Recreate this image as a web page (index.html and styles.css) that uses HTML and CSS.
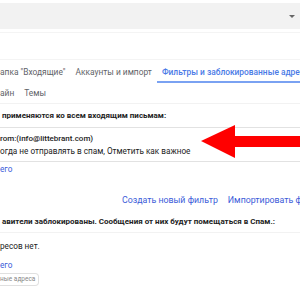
FILE: index.html
```html
<!DOCTYPE html>
<html lang="ru">
<head>
    <meta charset="UTF-8">
    <title>Настройки</title>
    <link rel="stylesheet" href="styles.css">
</head>
<body>
    <div class="search-bar">
        <span class="caret"></span>
    </div>
    <div class="header-space"></div>

    <!-- Settings tabs -->
    <div class="tabs">
        <div class="tab-row">
            <span class="tab tab-first">апка "Входящие"</span>
            <span class="tab">Аккаунты и импорт</span>
            <span class="tab active">Фильтры и заблокированные адреса</span>
        </div>
        <div class="tab-row tab-row-second">
            <span class="tab tab-first">айн</span>
            <span class="tab">Темы</span>
        </div>
    </div>

    <div class="content">
        <div class="section-title">применяются ко всем входящим письмам:</div>

        <div class="filter-row">
            <div class="filter-rule">rom:(info@littebrant.com)</div>
            <div class="filter-action">огда не отправлять в спам, Отметить как важное</div>
            <!-- Red pointer arrow over the row -->
            <svg class="pointer" width="100" height="34" viewBox="0 0 100 34">
                <polygon points="0,16 34,0 34,11 100,11 100,22 34,22 34,33" fill="#ff0000"/>
            </svg>
        </div>

        <a class="link select-link">его</a>

        <div class="filter-actions">
            <a class="link">Создать новый фильтр</a>
            <a class="link">Импортировать фильтры</a>
        </div>

        <div class="section-title blocked-title">авители заблокированы. Сообщения от них будут помещаться в Спам.:</div>

        <div class="blocked-list">
            <div class="empty-text">ресов нет.</div>
            <a class="link select-link">его</a>
            <span class="small-button">ные адреса</span>
        </div>
    </div>
</body>
</html>
```

FILE: styles.css
```css
body {
    margin: 0;
    padding: 0;
    font-family: Roboto, "Liberation Sans", Arial, sans-serif;
    font-size: 8.2px;
    color: #222222;
    background-color: #ffffff;
    overflow: hidden;
}

.search-bar {
    height: 26px;
    margin-top: 3px;
    background-color: #f2f2f2;
    display: flex;
    align-items: center;
    justify-content: flex-end;
    padding-right: 5px;
}

.caret {
    width: 0;
    height: 0;
    border-left: 3px solid transparent;
    border-right: 3px solid transparent;
    border-top: 3px solid #666666;
}

.header-space {
    height: 26px;
    border-top: 1px solid #f4f4f4;
    margin-top: 3px;
}

.tabs {
    border-top: 1px solid #f4f4f4;
    border-bottom: 1px solid #f2f2f2;
}

.tab-row {
    display: flex;
    height: 23px;
    align-items: stretch;
}

.tab-row-second {
    height: 20px;
}

.tab {
    font-size: 8.4px;
    color: #5f6368;
    padding: 0 5px;
    display: flex;
    align-items: center;
    white-space: nowrap;
}

.tab-first {
    padding-left: 0;
}

.active {
    color: #4a7ae6;
    font-weight: 500;
    border-bottom: 2px solid #7aa2f2;
    padding-top: 2px;
}

.content {
    display: flex;
    flex-direction: column;
}

.section-title {
    font-size: 8px;
    font-weight: bold;
    line-height: 11px;
    padding: 6px 2px;
    white-space: nowrap;
}

.filter-row {
    position: relative;
    border-top: 1px solid #e2e2e2;
    border-bottom: 1px solid #e2e2e2;
    padding: 5px 0 4px;
    line-height: 12px;
}

.filter-rule {
    font-size: 8px;
    font-weight: 500;
}

.pointer {
    position: absolute;
    left: 201px;
    top: -3px;
}

.link {
    color: #3b5bd9;
    text-decoration: none;
}

.select-link {
    padding-top: 1px;
    line-height: 12px;
}

.filter-actions {
    display: flex;
    gap: 10px;
    padding-left: 122px;
    margin-top: 19px;
    font-size: 8.8px;
    line-height: 12px;
    white-space: nowrap;
}

.blocked-title {
    margin-top: 4px;
    padding-bottom: 5px;
    border-bottom: 1px solid #f2f2f2;
}

.blocked-list {
    display: flex;
    flex-direction: column;
    align-items: flex-start;
    padding-top: 7px;
    line-height: 12px;
}

.blocked-list .select-link {
    margin-top: 7px;
    padding-top: 0;
}

.small-button {
    margin-top: 2px;
    font-size: 6.5px;
    line-height: 11px;
    color: #888888;
    border: 1px solid #e0e0e0;
    border-left: none;
    border-radius: 0 4px 4px 0;
    padding: 0 3px 0 0;
}
```
